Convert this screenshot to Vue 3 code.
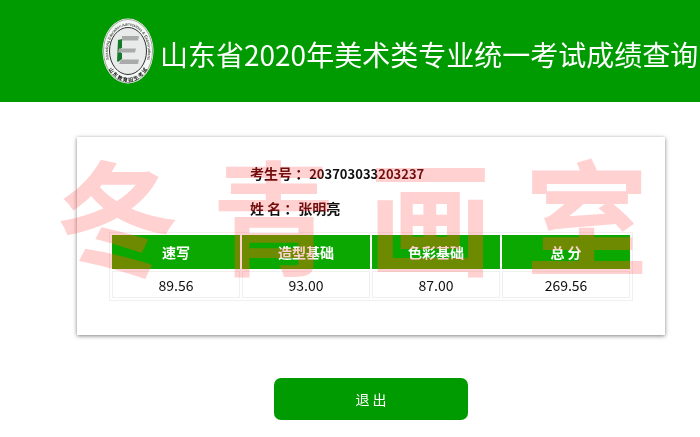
<script setup>
import { ref } from "vue";

const title = "山东省2020年美术类专业统一考试成绩查询";

const student = ref({
  number: "203703033203237",
  name: "张明亮",
});

const scores = ref([
  { subject: "速写", score: "89.56" },
  { subject: "造型基础", score: "93.00" },
  { subject: "色彩基础", score: "87.00" },
  { subject: "总 分", score: "269.56" },
]);

const watermark = ["冬", "青", "画", "室"];
</script>

<template>
  <div class="page">
    <header class="page_header">
      <svg class="logo" viewBox="0 0 52 66" aria-hidden="true">
        <defs>
          <path id="ring_top" d="M8 45 A20 26 0 1 1 44 45" />
          <path id="ring_bottom" d="M5 48 A24 30.5 0 0 0 47 48" />
        </defs>
        <ellipse cx="26" cy="33" rx="25.5" ry="32.5" fill="#fff" />
        <ellipse cx="26" cy="33" rx="24.5" ry="31.5" fill="#f4f8f4" stroke="#666" stroke-width="0.6" />
        <ellipse cx="26" cy="33" rx="18.5" ry="23.5" fill="#e9eaea" stroke="#333" stroke-width="1" />
        <text class="ring_en">
          <textPath href="#ring_top" startOffset="50%" text-anchor="middle">Shandong Education Admissions &amp; Examinations</textPath>
        </text>
        <text class="ring_cn">
          <textPath href="#ring_bottom" startOffset="50%" text-anchor="middle">山 东 教 育 招 生 考 试</textPath>
        </text>
        <path d="M16 22 L20 21 V30 H19 V35 H20 V41 L16 44 L15 43 Z" fill="#137a2c" />
        <path d="M20 18 H37 L36 22.5 H20 Z" fill="#aaa" />
        <path d="M17 30.5 H34 L33 34.5 H16 Z" fill="#aaa" />
        <path d="M19 41.5 H37 L36 46 H17 Z" fill="#aaa" />
      </svg>
      <h1 class="page_title">{{ title }}</h1>
    </header>

    <main class="content">
      <section class="card">
        <dl class="student">
          <div class="student_row">
            <dt>考生号 ：</dt>
            <dd>{{ student.number }}</dd>
          </div>
          <div class="student_row">
            <dt>姓 名 ：</dt>
            <dd>{{ student.name }}</dd>
          </div>
        </dl>

        <table class="scores">
          <thead>
            <tr>
              <th v-for="item in scores" :key="item.subject" scope="col">{{ item.subject }}</th>
            </tr>
          </thead>
          <tbody>
            <tr>
              <td v-for="item in scores" :key="item.subject">{{ item.score }}</td>
            </tr>
          </tbody>
        </table>

        <div class="watermark">
          <span v-for="char in watermark" :key="char">{{ char }}</span>
        </div>
      </section>

      <button type="button" class="exit_button">退 出</button>
    </main>
  </div>
</template>

<style>
html {
  background: #fff;
}

body {
  margin: 0;
}
</style>

<style scoped>
.page {
  font-family: "Noto Sans CJK SC", sans-serif;
  color: #111;
}

.page_header {
  display: flex;
  align-items: center;
  gap: 6px;
  height: 102px;
  padding-left: 102px;
  background: #009b00;
}

.logo {
  flex: none;
  width: 52px;
  height: 66px;
}

.ring_en {
  font-family: "Liberation Sans", sans-serif;
  font-size: 4px;
  fill: #111;
}

.ring_cn {
  font-size: 5px;
  font-weight: bold;
  fill: #111;
}

.page_title {
  margin: 0;
  padding-top: 6px;
  font-size: 28px;
  font-weight: 400;
  line-height: 40px;
  color: #fff;
  white-space: nowrap;
}

.content {
  display: flex;
  flex-direction: column;
  align-items: center;
  margin: 35px 5% 0 11%;
}

.card {
  position: relative;
  box-sizing: border-box;
  width: 100%;
  padding: 19px 32px 34px;
  background: #fff;
  box-shadow: 0 1px 4px rgba(0, 0, 0, 0.5);
}

.student {
  margin: 0;
  padding-left: 141px;
  font-size: 14px;
  font-weight: bold;
  line-height: 35px;
}

.student_row {
  display: flex;
}

.student_row dd {
  margin: 0;
}

.student_row:first-child dd {
  font-size: 13px;
}

.scores {
  width: 100%;
  margin-top: 6px;
  table-layout: fixed;
  border: 1px solid #f0f0f0;
  border-spacing: 2px;
  text-align: center;
}

.scores th {
  height: 34px;
  padding: 0;
  font-size: 14px;
  color: #fff;
  background: #0aa800;
}

.scores td {
  height: 25px;
  padding: 0;
  font-size: 14px;
  border: 1px solid #f0f0f0;
}

/* hard-light keeps the red readable on both the white card and the green cells */
.watermark {
  position: absolute;
  top: 0;
  right: 0;
  bottom: 48px;
  left: -38px;
  display: grid;
  grid-template-columns: repeat(4, 1fr);
  place-items: center;
  font-size: 124px;
  font-weight: bold;
  line-height: 1;
  color: rgba(245, 74, 74, 0.44);
  mix-blend-mode: hard-light;
  pointer-events: none;
}

.exit_button {
  width: 33%;
  height: 42px;
  margin-top: 43px;
  padding: 0;
  font-family: inherit;
  font-size: 14px;
  color: #fff;
  background: #009b00;
  border: 0;
  border-radius: 7px;
  cursor: pointer;
}

.exit_button:hover {
  background: #0aa800;
}
</style>
